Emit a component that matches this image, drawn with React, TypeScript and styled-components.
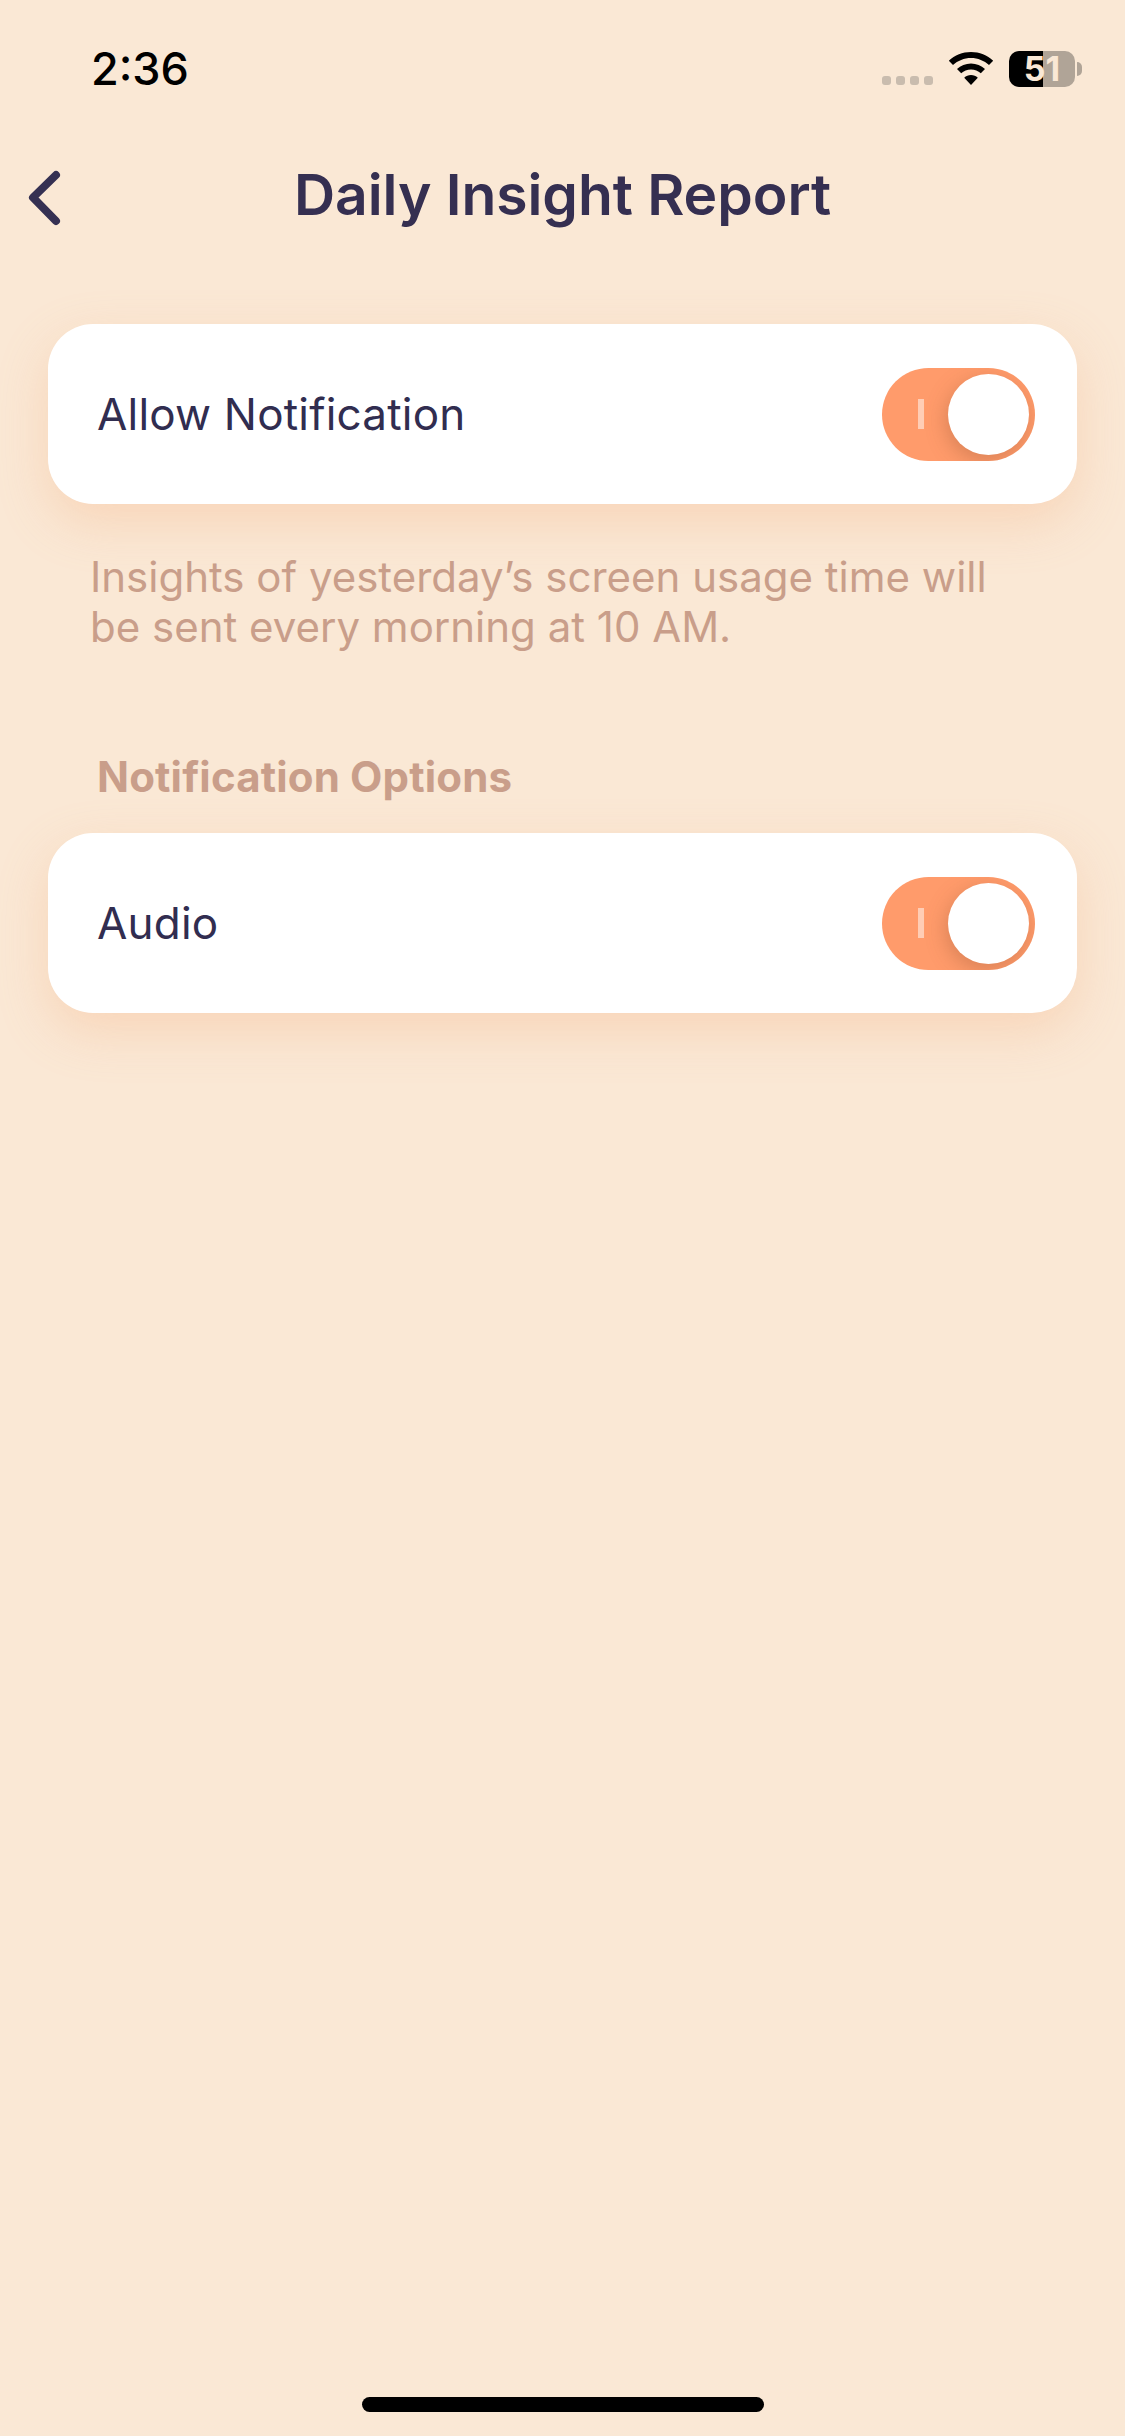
import React from "react";
import styled, { createGlobalStyle } from "styled-components";

const GlobalStyle = createGlobalStyle`
  html, body {
    margin: 0;
    padding: 0;
    background: #fae8d5;
  }
  * {
    box-sizing: border-box;
  }
`;

const Page = styled.div`
  width: 1125px;
  height: 2436px;
  background: #fae8d5;
  display: flex;
  flex-direction: column;
  font-family: Inter, "Liberation Sans", sans-serif;
  overflow: hidden;
`;

const StatusBar = styled.div`
  height: 136px;
  padding: 41px 43px 0 91px;
  display: flex;
  align-items: flex-start;
  justify-content: space-between;
`;

const Time = styled.span`
  font-size: 45px;
  line-height: 56px;
  font-weight: 500;
  color: #000;
`;

const StatusIcons = styled.div`
  display: flex;
  align-items: flex-start;
  padding-top: 10px;
`;

const Dots = styled.div`
  display: flex;
  gap: 5px;
  margin-top: 25px;
  margin-right: 15px;
`;

const Dot = styled.span`
  width: 9px;
  height: 9px;
  border-radius: 3px;
  background: #c9bcae;
`;

const WifiIcon = styled.svg`
  width: 46px;
  height: 33px;
  margin-top: 1px;
  margin-right: 15px;
`;

const Battery = styled.div`
  width: 66px;
  height: 36px;
  border-radius: 10px;
  background: linear-gradient(to right, #000 34px, #b0a497 34px);
  display: flex;
  align-items: center;
  justify-content: center;
  font-size: 34px;
  line-height: 36px;
  font-weight: 700;
  color: #fae8d5;
`;

const BatteryCap = styled.span`
  width: 5px;
  height: 14px;
  margin-top: 11px;
  margin-left: 2px;
  border-radius: 0 7px 7px 0;
  background: #b0a497;
`;

const Header = styled.div`
  position: relative;
  height: 116px;
  padding-top: 2px;
  display: flex;
  align-items: center;
  justify-content: center;
`;

const BackIcon = styled.svg`
  position: absolute;
  left: 24px;
  top: 32px;
  width: 40px;
  height: 64px;
`;

const Title = styled.h1`
  margin: 0;
  font-size: 57px;
  line-height: 70px;
  font-weight: 600;
  letter-spacing: -0.05px;
  color: #352f51;
`;

const Content = styled.div`
  padding: 72px 48px 0;
  display: flex;
  flex-direction: column;
`;

const Card = styled.div`
  height: 180px;
  border-radius: 45px;
  background: #fff;
  padding: 0 42px 0 49px;
  display: flex;
  align-items: center;
  justify-content: space-between;
  box-shadow: 0 18px 50px rgba(246, 170, 120, 0.3);
`;

const Label = styled.span`
  font-size: 44px;
  font-weight: 400;
  letter-spacing: 0.2px;
  color: #312d50;
`;

const Track = styled.div`
  width: 153px;
  height: 93px;
  border-radius: 47px;
  background: #ff9b6b;
  padding: 0 6px 0 36px;
  display: flex;
  align-items: center;
  overflow: hidden;
`;

const Bar = styled.span`
  width: 6px;
  height: 30px;
  background: rgba(255, 255, 255, 0.5);
`;

const Knob = styled.span`
  width: 81px;
  height: 81px;
  margin-left: auto;
  border-radius: 50%;
  background: #fff;
  box-shadow: -2px 6px 20px rgba(150, 85, 50, 0.36);
`;

const Hint = styled.p`
  margin: 48px 0 0 42px;
  width: 920px;
  font-size: 42px;
  line-height: 50px;
  font-weight: 400;
  color: #c99e8a;
`;

const SectionTitle = styled.h2`
  margin: 100px 0 31px 49px;
  font-size: 42px;
  line-height: 50px;
  font-weight: 700;
  letter-spacing: 0.15px;
  color: #c99e8a;
`;

const HomeBar = styled.div`
  width: 402px;
  height: 15px;
  margin: auto auto 24px;
  border-radius: 8px;
  background: #000;
`;

function Toggle() {
  return (
    <Track>
      <Bar />
      <Knob />
    </Track>
  );
}

export default function App() {
  return (
    <Page>
      <GlobalStyle />
      <StatusBar>
        <Time>2:36</Time>
        <StatusIcons>
          <Dots>
            <Dot />
            <Dot />
            <Dot />
            <Dot />
          </Dots>
          <WifiIcon viewBox="0 0 46 33">
            <path
              d="M23 0C14.500 0 6.700 3.300 0.800 8.700L5 13C9.800 8.700 16.100 6 23 6s13.200 2.700 18 7l4.200-4.300C39.300 3.300 31.500 0 23 0Z"
              fill="#000"
            />
            <path
              d="M23 11.500c-5.400 0-10.300 2.100-14 5.500l4.200 4.300c2.600-2.300 6-3.800 9.800-3.800s7.200 1.500 9.800 3.800L37 17c-3.700-3.400-8.600-5.500-14-5.500Z"
              fill="#000"
            />
            <path d="M23 23c-2.600 0-5 1-6.800 2.700L23 33l6.800-7.300C28 24 25.600 23 23 23Z" fill="#000" />
          </WifiIcon>
          <Battery>51</Battery>
          <BatteryCap />
        </StatusIcons>
      </StatusBar>
      <Header>
        <BackIcon viewBox="0 0 40 64">
          <path
            d="M32 7 9 29.500 32 53"
            fill="none"
            stroke="#353052"
            strokeWidth="8"
            strokeLinecap="round"
            strokeLinejoin="round"
          />
        </BackIcon>
        <Title>Daily Insight Report</Title>
      </Header>
      <Content>
        <Card>
          <Label>Allow Notification</Label>
          <Toggle />
        </Card>
        <Hint>Insights of yesterday’s screen usage time will be sent every morning at 10 AM.</Hint>
        <SectionTitle>Notification Options</SectionTitle>
        <Card>
          <Label>Audio</Label>
          <Toggle />
        </Card>
      </Content>
      <HomeBar />
    </Page>
  );
}
